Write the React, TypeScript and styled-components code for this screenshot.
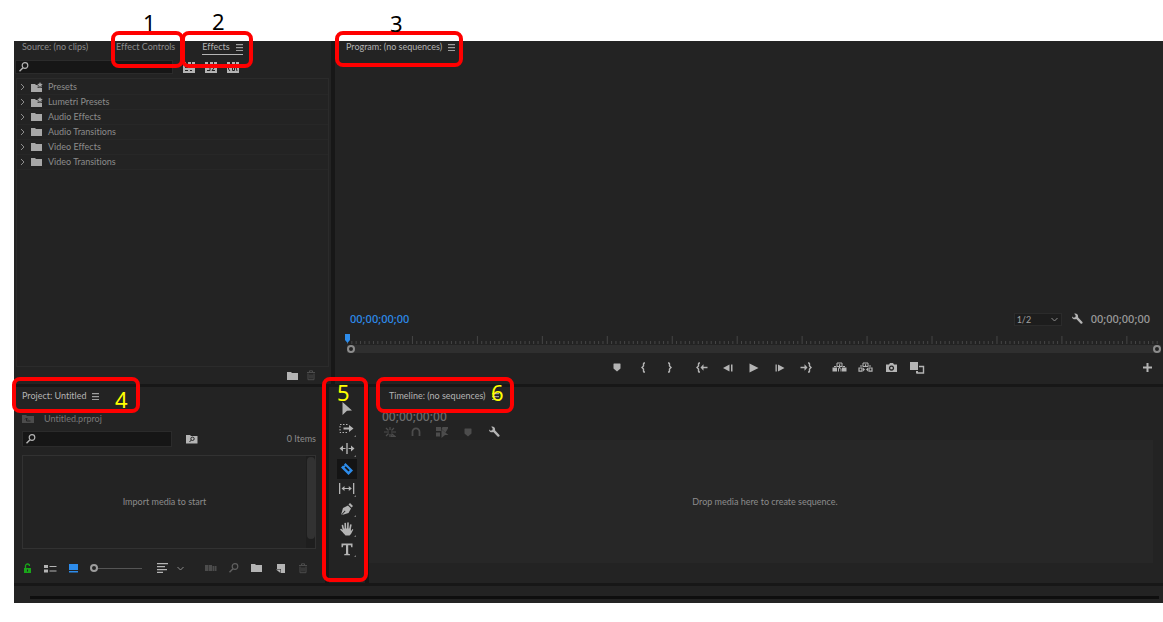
import React from "react";
import styled, { createGlobalStyle, css } from "styled-components";

const color = {
  panel: "#232323",
  gutter: "#171717",
  field: "#161616",
  line: "#2b2b2b",
  text: "#8c8c8c",
  bright: "#b4b4b4",
  dim: "#4c4c4c",
  blue: "#2d8ceb",
};

const GlobalStyle = createGlobalStyle`
  *, *::before, *::after { box-sizing: border-box; }
  body {
    margin: 0;
    background: #fff;
    color: ${color.text};
    font: 9px/12px Lato, sans-serif;
    font-variant-ligatures: none;
  }
  button, input, select { font: inherit; color: inherit; margin: 0; padding: 0; border: 0; background: none; border-radius: 0; }
  ul { list-style: none; margin: 0; padding: 0; }
`;

/* ---------- frame ---------- */

const Page = styled.div`
  display: flex;
  min-height: 100vh;
  padding: 41px 0 19px 14px;
`;

const Workspace = styled.main`
  flex: 1;
  min-width: 0;
  display: grid;
  grid-template-rows: 343fr 196fr 17px;
  gap: 3px;
  background: ${color.gutter};
`;

const TopRow = styled.div`
  display: grid;
  grid-template-columns: 317fr 828fr;
  gap: 4px;
`;

const BottomRow = styled.div`
  display: grid;
  grid-template-columns: 311fr 36px 794fr;
  gap: 4px;
`;

const Panel = styled.section`
  position: relative;
  display: flex;
  flex-direction: column;
  min-width: 0;
  background: ${color.panel};
`;

const StatusBar = styled.footer`
  background: ${color.panel};
  padding: 10px 4px 0 16px;
`;

const StatusTrack = styled.div`
  height: 3px;
  background: #0e0e0e;
`;

/* ---------- numbered callouts ---------- */

const CalloutBox = styled.div<{ $x: number; $y: number; $w: number; $h: number }>`
  position: absolute;
  z-index: 2;
  left: ${(p) => p.$x}px;
  top: ${(p) => p.$y}px;
  width: ${(p) => p.$w}px;
  height: ${(p) => p.$h}px;
  border: 4px solid #f00;
  border-radius: 8px;
  pointer-events: none;
`;

const CalloutNumber = styled.span<{ $x: number; $y: number; $inside?: boolean }>`
  position: absolute;
  left: ${(p) => p.$x}px;
  top: ${(p) => p.$y}px;
  font: 22px/22px "Noto Sans", sans-serif;
  color: ${(p) => (p.$inside ? "#ff0" : "#000")};
`;

type CalloutProps = { n: number; box: [number, number, number, number]; at: [number, number]; inside?: boolean };

const Callout = ({ n, box, at, inside }: CalloutProps) => (
  <CalloutBox $x={box[0]} $y={box[1]} $w={box[2]} $h={box[3]}>
    <CalloutNumber $x={at[0]} $y={at[1]} $inside={inside}>{n}</CalloutNumber>
  </CalloutBox>
);

/* ---------- shared controls ---------- */

const Tabs = styled.div<{ $pad?: number; $tall?: boolean }>`
  display: flex;
  align-items: flex-start;
  height: ${(p) => (p.$tall ? 22 : 17)}px;
  padding-top: ${(p) => (p.$tall ? 3 : 0)}px;
  padding-left: ${(p) => p.$pad ?? 8}px;
`;

const Tab = styled.button<{ $active?: boolean; $gap?: number; $line?: boolean }>`
  display: flex;
  align-items: center;
  gap: 6px;
  height: 12px;
  margin-left: ${(p) => p.$gap ?? 0}px;
  white-space: nowrap;
  color: ${(p) => (p.$active ? color.bright : color.text)};
  ${(p) => p.$line && css`
    height: 14px;
    padding-bottom: 1px;
    border-bottom: 1px solid ${color.bright};
  `}
`;

const IconButton = styled.button<{ $w?: number; $tone?: string }>`
  display: flex;
  flex: none;
  align-items: center;
  justify-content: center;
  width: ${(p) => p.$w ?? 16}px;
  height: 16px;
  color: ${(p) => p.$tone ?? color.bright};
`;

const SearchField = styled.label<{ $h: number; $wide?: boolean }>`
  display: flex;
  align-items: center;
  width: ${(p) => (p.$wide ? 51 : 50)}%;
  height: ${(p) => p.$h}px;
  padding-left: 2px;
  color: ${color.bright};
  background: ${color.field};
  border: 1px solid ${color.line};

  input { flex: 1; min-width: 0; outline: 0; }
`;

const Spacer = styled.div`flex: 1;`;

/* ---------- icons ---------- */

type SvgProps = { w?: number; h?: number; children: React.ReactNode };
const Svg = ({ w = 14, h = 14, children }: SvgProps) => (
  <svg width={w} height={h} viewBox={`0 0 ${w} ${h}`} fill="currentColor" aria-hidden="true">{children}</svg>
);

const stroke = { fill: "none", stroke: "currentColor" } as const;

const MenuIcon = () => <Svg w={7} h={8}><path d="M0 1h7v1H0zM0 4h7v1H0zM0 7h7v1H0z" opacity=".85" /><path d="M0 2h7v1H0zM0 5h7v1H0z" opacity=".2" /></Svg>;
const SearchIcon = () => <Svg w={12} h={12}><circle cx="7" cy="4.500" r="2.800" {...stroke} strokeWidth="1.200" /><path d="M5 6.700 1.500 10.200" {...stroke} strokeWidth="1.400" /></Svg>;
const ChevronRight = () => <Svg w={5} h={8}><path d="M1 1l3 3-3 3" {...stroke} /></Svg>;
const ChevronDown = () => <Svg w={7} h={5}><path d="M.5 1l3 3 3-3" {...stroke} /></Svg>;
const FolderIcon = () => <Svg w={12} h={10}><path d="M0 1h4l1 1h6v7H0z" /></Svg>;
const PresetIcon = () => (
  <Svg w={13} h={11}>
    <path d="M0 2h4l1 1h1.500l.5 1-.5 2 2.500-.500L11 6V10H0z" />
    <path d="M9 0l.8 1.700 2 .2-1.400 1.300.4 2L9 4.300l-1.800.9.4-2L6.200 1.900l2-.2z" />
  </Svg>
);
const TrashIcon = () => <Svg w={10} h={11}><path d="M1 2.500h8M3.500 2V.8h3V2M2 3.500v6.200h6V3.500M4 4.500v4M6 4.500v4" {...stroke} /></Svg>;
const Badge = ({ cut }: { cut: string }) => (
  <Svg w={13} h={11}>
    <path d="M0 0h3v3h2V0h3v3h1V0h3v11H0z" />
    <path d={cut} fill="none" stroke={color.panel} />
  </Svg>
);
const BinUpIcon = () => <Svg w={12} h={10}><path d="M0 1h4l1 1h7v7H0z" /><path d="M4.500 7V4.500M3 5.500l1.500-1.500L6 5.500M4.500 7h4" fill="none" stroke={color.panel} /></Svg>;
const BinSearchIcon = () => <Svg w={12} h={10}><path d="M0 1h4l1 1h6.500v7.500H0z" /><circle cx="6.500" cy="4.800" r="1.700" fill="none" stroke={color.panel} /><path d="M5.300 6 3.500 8" stroke={color.panel} /></Svg>;
const LockIcon = () => <Svg w={9} h={11}><path d="M1 5h7v5H1z" /><path d="M2.500 5V3a2 2 0 0 1 4 0" {...stroke} strokeWidth="1.300" /><path d="M4 6.500h1v2H4z" fill={color.panel} /></Svg>;
const ListViewIcon = () => <Svg w={13} h={9}><path d="M0 1h4v3H0zM0 5.500h4v3H0zM5.500 2h7v1h-7zM5.500 6.500h7v1h-7z" /></Svg>;
const IconViewIcon = () => <Svg w={9} h={9}><path d="M0 0h9v6H0zM0 7h9v1.500H0z" /></Svg>;
const SortIcon = () => <Svg w={11} h={10}><path d="M0 0h11v1.300H0zM0 3h8v1.300H0zM0 6h10v1.300H0zM0 8.700h6V10H0z" /></Svg>;
const AutomateIcon = () => <Svg w={12} h={8}><path d="M0 1h3.500v6H0zM4 1h3v6H4zM7.500 2h2v5h-2zM10 2h1.500v5H10z" /></Svg>;
const NewItemIcon = () => <Svg w={9} h={9}><path d="M1 0h8v9H5V5H1z" /><path d="M0 5.500h4.500V9z" /></Svg>;
const WrenchIcon = () => <Svg w={12} h={12}><path d="M1 3.500 2.800 4.800 4.500 4 4.600 2.200 3.200.8C5 .2 7 1 7.100 3.200L7 4.300l4.400 4.600c.8 1-.8 2.500-1.800 1.700L5.300 6.100C3.200 6.900.8 5.600 1 3.500z" /></Svg>;
const MarkerIcon = () => <Svg w={8} h={9}><path d="M.5 1q0-.5.5-.5h6q.5 0 .5.500v4.500L4 8.500.5 5.500z" /></Svg>;
const BracePath = ({ flip, x = 0 }: { flip?: boolean; x?: number }) => (
  <path transform={flip ? `translate(${x + 5} 0) scale(-1 1)` : `translate(${x} 0)`} d="M4 1H3.200Q2.500 1 2.500 1.800V4L1 5.500l1.500 1.500v2.200q0 .8.7.8H4" {...stroke} strokeWidth="1.400" />
);
const MarkInIcon = () => <Svg w={5} h={11}><BracePath /></Svg>;
const MarkOutIcon = () => <Svg w={5} h={11}><BracePath flip /></Svg>;
const GoInIcon = () => <Svg w={12} h={11}><BracePath /><path d="M4.500 5.500 7.500 2.300V4.800H11.500v1.500H7.500v2.500z" /></Svg>;
const GoOutIcon = () => <Svg w={12} h={11}><BracePath flip x={7} /><path d="M7.500 5.500 4.500 2.300V4.800H.5v1.500h4v2.500z" /></Svg>;
const StepBackIcon = () => <Svg w={10} h={8}><path d="M6.500.5v7L0 4zM8 .5h1.500v7H8z" /></Svg>;
const StepForwardIcon = () => <Svg w={10} h={8}><path d="M3 .5v7L9.500 4zM.5.5H1.800v7H.5z" /></Svg>;
const PlayIcon = () => <Svg w={10} h={10}><path d="M.5.5V9.500L9.500 5z" /></Svg>;
const LiftIcon = () => <Svg w={15} h={11}><path d="M.5 5.500H5V9.500H.5zM6 6.500h3L7.500 4.500zM10 5.500h4.500V9.500H10zM6 6.500h1v3H6zM8.500 6.500h1v3h-1z" /><path d="M5 1h5v3.500H5z" {...stroke} /><path d="M7 2.300h1.200v2.500H7zM2 4h2.500v1H2zM10.500 4H13v1h-2.500z" /></Svg>;
const ExtractIcon = () => <Svg w={15} h={11}><path d="M1 6h3v3.200H1zM11 6h3v3.200h-3z" {...stroke} strokeWidth="1.200" /><path d="M5 1h5v3.500H5z" {...stroke} /><path d="M7 2.300h1.200v2.500H7zM5 5.500l2 2-2 2zM10 5.500l-2 2 2 2zM2 3.500h2.500v1H2zM10.500 3.500H13v1h-2.500z" /></Svg>;
const CameraIcon = () => <Svg w={11} h={9}><path fillRule="evenodd" d="M0 1.500h3L4 0h3l1 1.500h3V9H0zM5.500 2.500a2.600 2.600 0 1 0 .01 0zM5.500 3.700a1.300 1.300 0 1 1-.01 0z" /></Svg>;
const CompareIcon = () => <Svg w={15} h={12}><path d="M0 0h8v8H0z" /><path d="M9 4.500h4.500v6.500H7V9" {...stroke} strokeWidth="1.400" /><path d="M6 9h2v2H6z" /></Svg>;
const PlusIcon = () => <Svg w={9} h={9}><path d="M3.500 0h2v3.500H9v2H5.500V9h-2V5.500H0v-2h3.500z" /></Svg>;

const SelectTool = () => <Svg w={16} h={14}><path d="M3.500 0 13 8.500 8 8.800 3.500 13z" /></Svg>;
const TrackTool = () => <Svg w={16} h={12}><path d="M8.500 1.500H1v8h7.500" {...stroke} strokeDasharray="1.500 1.500" /><path d="M4.500 4.500H10V2l4.500 3.500L10 9V6.500H4.500z" /></Svg>;
const RippleTool = () => <Svg w={16} h={12}><path d="M7.300 0h1.400v11H7.300z" /><path d="M.5 5.500 4 2.500V5h2.500v1H4v2.500zM15.500 5.500 12 2.500V5H9.500v1H12v2.500z" /></Svg>;
const RazorTool = () => <Svg w={16} h={14}><path fillRule="evenodd" d="M6.500 1 14 8.500 9.500 13 2 5.500 4 3.500l1 .5.500-.5L5 2.500zM5.500 5.500l4 4 1.200-1.200-4-4z" /></Svg>;
const SlipTool = () => <Svg w={16} h={12}><path d="M0 0h1.300v11H0zM14 0h1.300v11H14z" /><path d="M2.500 5.500l3-2.500v2h4.300V3l3 2.500-3 2.500V6H5.500v2z" /></Svg>;
const PenTool = () => <Svg w={16} h={14}><path d="M2 13 4 6 9 3.500 12 6.500 9.500 11 3 13l3.500-3.800-.6-.6zM9.500 2.500 11 1l3 3-1.500 1.500z" /></Svg>;
const HandTool = () => (
  <Svg w={16} h={14}>
    <path d="M4.500 8 3.500 3.500M6.500 7.500 6.200 1.500M8.800 7.500 9 1M10.800 8l1-5M5.500 11 2 7.500" {...stroke} strokeWidth="1.600" strokeLinecap="round" />
    <path d="M4 6.500h7.500L12 9l1.500-2 .8.500-2.300 4.500-1.500 1.500H6.500L4 10.500z" />
  </Svg>
);
const TypeTool = () => <Svg w={16} h={13}><path d="M2.500.5h11V4.200h-1.300L11.800 2.200H9.200v8.600l1.800.4v1.100H5.200v-1.100l1.800-.4V2.200H4.300L3.800 4.200H2.500z" /></Svg>;

const NestIcon = () => <Svg w={12} h={12}><path d="M2 2l2.500 2.500M10 2 7.500 4.500M6 1v3M2 10l2.500-2.500M6 11V8M0 6h5M7 6h5M8 8l3 2.500H7.500z" {...stroke} strokeWidth="1.200" /></Svg>;
const MagnetIcon = () => <Svg w={10} h={10}><path d="M1.500 9V4.800a3.500 3.500 0 0 1 7 0V9" {...stroke} strokeWidth="1.800" /></Svg>;
const LinkedIcon = () => <Svg w={13} h={12}><path d="M0 1h5v4H0zM0 6.500h4v4H0zM6.500 1H12v1.500L9.500 6.500 5.500 3zM5.500 3.500l7 5.500H9L5.500 12z" /></Svg>;

/* ---------- effects panel ---------- */

const EffectsSearchRow = styled.div`
  display: flex;
  align-items: center;
  gap: 6px;
  height: 18px;
  padding-left: 1px;

  label { margin-right: 2px; }
`;

const Tree = styled.ul`
  flex: 1;
  margin: 2px 2px 0;
  padding-top: 1px;
  border: 1px solid ${color.line};
`;

const TreeRow = styled.li`
  display: grid;
  grid-template-columns: 11px 17px 1fr;
  align-items: center;
  height: 15px;
  padding-left: 3px;
  border-bottom: 1px solid #272727;

  svg:nth-child(2) { color: #a8a8a8; }
`;

const PanelFooter = styled.div`
  display: flex;
  align-items: center;
  justify-content: flex-end;
  gap: 2px;
  height: 17px;
  padding-right: 12px;
`;

const folders: [string, boolean][] = [
  ["Presets", true],
  ["Lumetri Presets", true],
  ["Audio Effects", false],
  ["Audio Transitions", false],
  ["Video Effects", false],
  ["Video Transitions", false],
];

const EffectsPanel = () => (
  <Panel>
    <Tabs>
      <Tab>Source: (no clips)</Tab>
      <Tab $gap={28}>Effect Controls</Tab>
      <Tab $gap={27} $active $line>Effects <MenuIcon /></Tab>
    </Tabs>
    <EffectsSearchRow>
      <SearchField $h={14}><SearchIcon /><input type="text" aria-label="Search effects" /></SearchField>
      <IconButton aria-label="Accelerated effects"><Badge cut="M2 5.500h3M2 8.500h3M6.500 5.500h4M7 8.500h2" /></IconButton>
      <IconButton aria-label="32-bit color effects"><Badge cut="M2 5.500h3v3H2M7 5.500h3M9 6 7 8.500h3" /></IconButton>
      <IconButton aria-label="YUV effects"><Badge cut="M1.500 5v2L3 9M5.500 5v3.500h2V5M9 5l1 4" /></IconButton>
    </EffectsSearchRow>
    <Tree>
      {folders.map(([name, preset]) => (
        <TreeRow key={name}><ChevronRight />{preset ? <PresetIcon /> : <FolderIcon />}<span>{name}</span></TreeRow>
      ))}
    </Tree>
    <PanelFooter>
      <IconButton aria-label="New custom bin"><FolderIcon /></IconButton>
      <IconButton aria-label="Delete" $tone={color.dim}><TrashIcon /></IconButton>
    </PanelFooter>
    <Callout n={1} box={[97, -10, 73, 37]} at={[28, -24]} />
    <Callout n={2} box={[167, -10, 72, 37]} at={[27, -25]} />
  </Panel>
);

/* ---------- program monitor ---------- */

const MonitorInfo = styled.div`
  display: flex;
  align-items: center;
  height: 16px;
  padding: 0 13px 0 15px;
`;

const Timecode = styled.span<{ $size?: number; $tone?: string }>`
  font-family: "Noto Sans", sans-serif;
  font-weight: 500;
  font-size: ${(p) => p.$size ?? 11}px;
  color: ${(p) => p.$tone ?? "#9c9c9c"};
`;

const Resolution = styled.label`
  display: grid;
  align-items: center;
  width: 48px;
  height: 13px;
  margin-right: 1px;
  background: #1d1d1d;
  border: 1px solid ${color.line};

  select { grid-area: 1 / 1; width: 100%; height: 11px; line-height: 11px; appearance: none; padding-left: 2px; color: #a0a0a0; }
  svg { grid-area: 1 / 1; justify-self: end; margin-right: 3px; pointer-events: none; }
`;

const Ruler = styled.svg`
  display: block;
  width: 100%;
  height: 12px;
  overflow: visible;
`;

const RulerArea = styled.div`
  padding: 6px 2px 0 12px;
`;

const ZoomBar = styled.div`
  display: flex;
  align-items: center;
  justify-content: space-between;
  height: 8px;
  background: #2f2f2f;
`;

const ZoomHandle = styled.span`
  width: 8px;
  height: 8px;
  border: 2px solid #8c8c8c;
  border-radius: 50%;
  background: ${color.panel};
`;

const Transport = styled.div`
  display: grid;
  grid-template-columns: 1fr auto 1fr;
  align-items: center;
  height: 31px;
  padding: 0 8px 2px 44px;

  > :last-child { justify-self: end; }
`;

const TransportButtons = styled.div`
  display: flex;
  gap: 7px;
`;

const TransportGroup = styled.div`
  display: flex;
`;

const transport: [string, React.FC][][] = [
  [["Add marker", MarkerIcon], ["Mark in", MarkInIcon], ["Mark out", MarkOutIcon]],
  [["Go to in", GoInIcon], ["Step back", StepBackIcon], ["Play", PlayIcon], ["Step forward", StepForwardIcon], ["Go to out", GoOutIcon]],
  [["Lift", LiftIcon], ["Extract", ExtractIcon], ["Export frame", CameraIcon], ["Comparison view", CompareIcon]],
];

const TICKS = 188;

const ProgramPanel = () => (
  <Panel>
    <Tabs $pad={11}><Tab $active>Program: (no sequences) <MenuIcon /></Tab></Tabs>
    <Spacer />
    <MonitorInfo>
      <Timecode $tone={color.blue}>00;00;00;00</Timecode>
      <Spacer />
      <Resolution>
        <select aria-label="Playback resolution"><option>1/2</option></select>
        <ChevronDown />
      </Resolution>
      <IconButton aria-label="Settings" $w={28}><WrenchIcon /></IconButton>
      <Timecode>00;00;00;00</Timecode>
    </MonitorInfo>
    <RulerArea>
      <Ruler aria-hidden="true">
        {Array.from({ length: TICKS }, (_, i) => (
          <rect key={i} x={`${(i / TICKS) * 100}%`} y={i % 15 === 0 ? 3 : 8} width="1" height={i % 15 === 0 ? 8 : 3} fill="#464646" />
        ))}
        <path d="M-2 1h5v6L.5 10-2 7z" fill={color.blue} />
      </Ruler>
      <ZoomBar><ZoomHandle /><ZoomHandle /></ZoomBar>
    </RulerArea>
    <Transport>
      <span />
      <TransportButtons>
        {transport.map((group, i) => (
          <TransportGroup key={i}>
            {group.map(([label, Glyph]) => <IconButton key={label} aria-label={label} $w={26}><Glyph /></IconButton>)}
          </TransportGroup>
        ))}
      </TransportButtons>
      <IconButton aria-label="Button editor"><PlusIcon /></IconButton>
    </Transport>
    <Callout n={3} box={[0, -10, 128, 36]} at={[51, -23]} />
  </Panel>
);

/* ---------- project panel ---------- */

const ProjectBody = styled.div`
  flex: 1;
  display: flex;
  flex-direction: column;
  padding: 0 9px 4px 8px;
`;

const PathRow = styled.div`
  display: flex;
  align-items: center;
  gap: 10px;
  height: 20px;
  color: #777;

  svg { color: ${color.dim}; }
`;

const ProjectSearchRow = styled.div`
  display: flex;
  align-items: center;
  gap: 12px;
  height: 20px;
`;

const MediaList = styled.div`
  flex: 1;
  display: flex;
  margin: 6px 0 8px;
  border: 1px solid #323232;
`;

const EmptyHint = styled.p`
  flex: 1;
  margin: 0;
  align-self: center;
  text-align: center;
`;

const ListScroll = styled.div`
  width: 9px;
  padding: 1px 0 9px 1px;
  background: #1e1e1e;

  &::before {
    content: "";
    display: block;
    height: 100%;
    border-radius: 4px;
    background: #323232;
  }
`;

const ProjectTools = styled.div`
  display: flex;
  align-items: center;
  height: 22px;
  gap: 7px;
  padding-right: 5px;
  margin-left: -3px;
`;

const SizeSlider = styled.input`
  appearance: none;
  width: 52px;
  height: 8px;
  margin: 0 5px 0 2px;
  background: linear-gradient(#555, #555) 8px 4px / 100% 1px no-repeat;

  &::-webkit-slider-thumb {
    appearance: none;
    width: 8px;
    height: 8px;
    border: 2px solid #9c9c9c;
    border-radius: 50%;
    background: ${color.panel};
  }
`;

const ProjectPanel = () => (
  <Panel>
    <Tabs $tall><Tab $active>Project: Untitled <MenuIcon /></Tab></Tabs>
    <ProjectBody>
      <PathRow><BinUpIcon />Untitled.prproj</PathRow>
      <ProjectSearchRow>
        <SearchField $h={16} $wide><SearchIcon /><input type="text" aria-label="Search project" /></SearchField>
        <IconButton aria-label="New search bin"><BinSearchIcon /></IconButton>
        <Spacer />
        <span>0 Items</span>
      </ProjectSearchRow>
      <MediaList><EmptyHint>Import media to start</EmptyHint><ListScroll /></MediaList>
      <ProjectTools>
        <IconButton aria-label="Project writable" $tone="#1aa51a"><LockIcon /></IconButton>
        <IconButton aria-label="List view"><ListViewIcon /></IconButton>
        <IconButton aria-label="Icon view" $tone={color.blue}><IconViewIcon /></IconButton>
        <SizeSlider type="range" defaultValue={0} aria-label="Thumbnail size" />
        <IconButton aria-label="Sort icons"><SortIcon /></IconButton>
        <IconButton aria-label="Sort order" $w={7} $tone={color.text}><ChevronDown /></IconButton>
        <Spacer />
        <IconButton aria-label="Automate to sequence" $tone={color.dim}><AutomateIcon /></IconButton>
        <IconButton aria-label="Find" $tone="#606060"><SearchIcon /></IconButton>
        <IconButton aria-label="New bin"><FolderIcon /></IconButton>
        <IconButton aria-label="New item"><NewItemIcon /></IconButton>
        <IconButton aria-label="Clear" $tone={color.dim}><TrashIcon /></IconButton>
      </ProjectTools>
    </ProjectBody>
    <Callout n={4} box={[-2, -10, 128, 36]} at={[99, 7]} inside />
  </Panel>
);

/* ---------- tools ---------- */

const ToolList = styled.div`
  display: flex;
  flex-direction: column;
  align-items: center;
  padding-top: 12px;
`;

const ToolButton = styled.button<{ $active?: boolean; $more?: boolean }>`
  position: relative;
  display: flex;
  align-items: center;
  justify-content: center;
  width: 20px;
  height: 20px;
  color: ${(p) => (p.$active ? color.blue : color.bright)};
  background: ${(p) => (p.$active ? "#141414" : "none")};
  ${(p) => p.$more && css`
    &::after {
      content: "";
      position: absolute;
      right: 1px;
      bottom: 2px;
      border: 1px solid;
      border-color: transparent #777 #777 transparent;
    }
  `}
`;

const tools: [string, React.FC, boolean][] = [
  ["Selection", SelectTool, false],
  ["Track select forward", TrackTool, true],
  ["Ripple edit", RippleTool, true],
  ["Razor", RazorTool, false],
  ["Slip", SlipTool, true],
  ["Pen", PenTool, true],
  ["Hand", HandTool, true],
  ["Type", TypeTool, true],
];

const ToolsPanel = () => (
  <Panel>
    <ToolList>
      {tools.map(([label, Glyph, more]) => (
        <ToolButton key={label} aria-label={label} $active={label === "Razor"} $more={more}><Glyph /></ToolButton>
      ))}
    </ToolList>
    <Callout n={5} box={[-7, -10, 46, 205]} at={[11, 0]} inside />
  </Panel>
);

/* ---------- timeline ---------- */

const TimelineHead = styled.div`
  height: 15px;
  padding: 1px 0 0 13px;
  line-height: 14px;
`;

const TimelineTools = styled.div`
  display: flex;
  align-items: center;
  gap: 10px;
  height: 16px;
  padding-left: 13px;
`;

const DropArea = styled.div`
  flex: 1;
  display: flex;
  align-items: center;
  justify-content: center;
  margin: 0 10px 20px 0;
  padding-left: 8px;
  background: #272727;
`;

const TimelinePanel = () => (
  <Panel>
    <Tabs $tall $pad={20}><Tab $active>Timeline: (no sequences) <MenuIcon /></Tab></Tabs>
    <TimelineHead><Timecode $size={12} $tone="#6c6c6c">00;00;00;00</Timecode></TimelineHead>
    <TimelineTools>
      <IconButton aria-label="Insert as nest" $tone={color.dim}><NestIcon /></IconButton>
      <IconButton aria-label="Snap" $tone={color.dim}><MagnetIcon /></IconButton>
      <IconButton aria-label="Linked selection" $tone={color.dim}><LinkedIcon /></IconButton>
      <IconButton aria-label="Add marker" $tone={color.dim}><MarkerIcon /></IconButton>
      <IconButton aria-label="Timeline settings"><WrenchIcon /></IconButton>
    </TimelineTools>
    <DropArea>Drop media here to create sequence.</DropArea>
    <Callout n={6} box={[7, -10, 138, 36]} at={[111, 0]} inside />
  </Panel>
);

export default function App() {
  return (
    <>
      <GlobalStyle />
      <Page>
        <Workspace>
          <TopRow><EffectsPanel /><ProgramPanel /></TopRow>
          <BottomRow><ProjectPanel /><ToolsPanel /><TimelinePanel /></BottomRow>
          <StatusBar><StatusTrack /></StatusBar>
        </Workspace>
      </Page>
    </>
  );
}
